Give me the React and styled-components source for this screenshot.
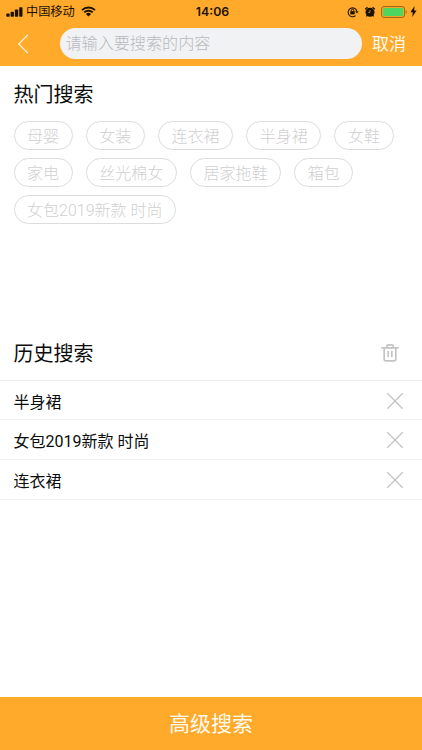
import { useState } from "react";
import styled, { createGlobalStyle } from "styled-components";

const GlobalStyle = createGlobalStyle`
  * {
    box-sizing: border-box;
  }

  body {
    margin: 0;
    background: #fff;
    color: #0c0c0c;
    font-family: Roboto, "Noto Sans CJK SC", sans-serif;
  }

  button,
  input {
    padding: 0;
    border: 0;
    background: none;
    color: inherit;
    font: inherit;
  }
`;

const Page = styled.div`
  display: flex;
  flex-direction: column;
  height: 750px;
  overflow: hidden;
`;

const Header = styled.header`
  height: 65.5px;
  background: #ffaa2b;
`;

const StatusBar = styled.div`
  display: grid;
  grid-template-columns: 1fr auto 1fr;
  align-items: center;
  height: 22px;
  padding: 0 5px 0 6px;
  color: #1c1203;
`;

const Carrier = styled.div`
  display: flex;
  align-items: center;
  font-size: 12.2px;
  line-height: 22px;

  span {
    margin: 0 6px 0 3px;
    padding-top: 1px;
  }
`;

const Clock = styled.div`
  padding-left: 2px;
  font-family: Inter, sans-serif;
  font-size: 12.3px;
  font-weight: 600;
`;

const StatusIcons = styled.div`
  display: flex;
  align-items: center;
  justify-content: flex-end;
  gap: 5px;

  svg:last-child {
    margin-left: -3px;
  }
`;

const SearchBar = styled.div`
  display: flex;
  align-items: center;
  height: 43px;
  padding: 0 16px 0 17px;
`;

const BackButton = styled.button`
  display: flex;
  width: 42.5px;
`;

const SearchInput = styled.input`
  width: 302.5px;
  height: 31px;
  margin-right: 10px;
  padding: 0 6px;
  border-radius: 16px;
  background: #f1f2f4;
  font-size: 16.1px;
  font-weight: 300;
  outline: none;

  &::placeholder {
    color: #b9babe;
    opacity: 1;
  }
`;

const CancelButton = styled.button`
  color: #fffaf0;
  font-size: 17px;
  line-height: 24px;
  white-space: nowrap;
`;

const Hot = styled.section`
  height: 259px;
  padding: 14px 13.5px 0;
`;

const Title = styled.h2`
  margin: 0;
  font-size: 20px;
  font-weight: 400;
  line-height: 30px;
`;

const Tags = styled.div`
  display: flex;
  flex-wrap: wrap;
  gap: 8px 13px;
  margin-top: 11.5px;
`;

const Tag = styled.button`
  height: 29px;
  padding: 1px 12.6px 0;
  border: 1px solid #dcdcdc;
  border-radius: 15px;
  color: #d0d0d0;
  font-size: 16px;
  font-weight: 300;
  line-height: 27px;
  white-space: nowrap;
`;

const History = styled.section`
  flex: 1;
`;

const HistoryHead = styled.div`
  display: flex;
  align-items: center;
  justify-content: space-between;
  height: 56.3px;
  padding: 1px 22px 0 13.5px;
  border-bottom: 1px solid #ececec;

  h2 {
    padding-top: 2px;
  }
`;

const HistoryRow = styled.div`
  display: flex;
  align-items: center;
  justify-content: space-between;
  height: 39.6px;
  padding: 1px 18px 0 13.5px;
  border-bottom: 1px solid #f0f0f0;
  font-size: 16px;
`;

const IconButton = styled.button`
  display: flex;
  color: #c4c4c4;
`;

const AdvancedButton = styled.button`
  height: 53px;
  padding-top: 1px;
  background: #ffaa2b;
  color: #fffaf0;
  font-size: 21px;
  line-height: 52px;
`;

const SignalIcon = () => (
  <svg width="17" height="10" viewBox="0 0 17 10" fill="currentColor">
    <rect x="0.3" y="6.4" width="3.3" height="3.3" rx="0.7" />
    <rect x="4.6" y="4.8" width="3.3" height="4.9" rx="0.7" />
    <rect x="8.9" y="2.6" width="3.3" height="7.1" rx="0.7" />
    <rect x="13.2" y="0.2" width="3.3" height="9.5" rx="0.7" />
  </svg>
);

const WifiIcon = () => (
  <svg width="15" height="11" viewBox="0 0 15 11" fill="none">
    <path
      d="M1 4.1a9.3 9.3 0 0 1 13 0M3.3 6.4a6 6 0 0 1 8.4 0"
      stroke="currentColor"
      strokeWidth="1.9"
    />
    <path d="M4.9 8a3.7 3.7 0 0 1 5.2 0l-2.6 2.6z" fill="currentColor" />
  </svg>
);

const RotationLockIcon = () => (
  <svg width="12" height="12" viewBox="0 0 12 12" fill="none">
    <path
      d="M8.5 9.6A4.4 4.4 0 1 1 9.8 5.2"
      stroke="currentColor"
      strokeWidth="1.1"
    />
    <path d="M8.2 5.2h3.4L9.9 7.6z" fill="currentColor" />
    <rect x="3.3" y="5.2" width="4.4" height="3.2" fill="currentColor" />
    <path
      d="M4.2 5.4V4.6a1.3 1.3 0 0 1 2.6 0v.8"
      stroke="currentColor"
      strokeWidth="1"
    />
  </svg>
);

const AlarmIcon = () => (
  <svg width="12" height="12" viewBox="0 0 12 12" fill="none">
    <circle cx="6" cy="6.2" r="4.5" fill="currentColor" />
    <path
      d="M1.2 3.2 3.5 1.2M10.8 3.2 8.5 1.2M3.2 9.4l-.8 1M8.8 9.4l.8 1"
      stroke="currentColor"
      strokeWidth="1.4"
    />
    <path d="M6 4v2.4H4.3" stroke="#c88522" strokeWidth="0.9" />
  </svg>
);

const BatteryIcon = () => (
  <svg width="27" height="12" viewBox="0 0 27 12" fill="none">
    <rect
      x="0.6"
      y="0.6"
      width="23"
      height="10.8"
      rx="2.4"
      stroke="#8a5c14"
      strokeWidth="0.9"
    />
    <rect x="2" y="2" width="20.2" height="8" rx="1.2" fill="#4cd55f" />
    <path d="M24.8 4v4c1.2-.5 1.2-3.5 0-4z" fill="#8a5c14" />
  </svg>
);

const BoltIcon = () => (
  <svg width="7" height="11" viewBox="0 0 7 11" fill="currentColor">
    <path d="M4.6 0 .4 6.2h2.4L2.2 11l4.4-6.4H4.1z" />
  </svg>
);

const BackIcon = () => (
  <svg width="12" height="20" viewBox="0 0 12 20" fill="none">
    <path d="M10.8 1 1.7 10l9.1 9" stroke="#fff5e0" strokeWidth="1.1" />
  </svg>
);

const TrashIcon = () => (
  <svg
    width="20"
    height="20"
    viewBox="0 0 20 20"
    fill="none"
    stroke="currentColor"
    strokeWidth="1.7"
  >
    <path d="M1.3 4.8h17.4M6.9 4.6V3q0-1.1 1.1-1.1h4q1.1 0 1.1 1.1v1.6" />
    <path d="M4.2 5v11.6q0 1.3 1.3 1.3h9q1.3 0 1.3-1.3V5M8.2 8v6M11.8 8v6" />
  </svg>
);

const CloseIcon = () => (
  <svg width="18" height="18" viewBox="0 0 18 18" fill="none">
    <path
      d="M1.3 1.3l15.4 15.4M16.7 1.3 1.3 16.7"
      stroke="currentColor"
      strokeWidth="1.3"
    />
  </svg>
);

const hotWords = [
  "母婴",
  "女装",
  "连衣裙",
  "半身裙",
  "女鞋",
  "家电",
  "丝光棉女",
  "居家拖鞋",
  "箱包",
  "女包2019新款 时尚",
];

export default function App() {
  const [keyword, setKeyword] = useState("");
  const [history, setHistory] = useState([
    "半身裙",
    "女包2019新款 时尚",
    "连衣裙",
  ]);

  const removeItem = (item) =>
    setHistory(history.filter((entry) => entry !== item));

  return (
    <Page>
      <GlobalStyle />
      <Header>
        <StatusBar>
          <Carrier>
            <SignalIcon />
            <span>中国移动</span>
            <WifiIcon />
          </Carrier>
          <Clock>14:06</Clock>
          <StatusIcons>
            <RotationLockIcon />
            <AlarmIcon />
            <BatteryIcon />
            <BoltIcon />
          </StatusIcons>
        </StatusBar>
        <SearchBar>
          <BackButton>
            <BackIcon />
          </BackButton>
          <SearchInput
            placeholder="请输入要搜索的内容"
            value={keyword}
            onChange={(e) => setKeyword(e.target.value)}
          />
          <CancelButton onClick={() => setKeyword("")}>取消</CancelButton>
        </SearchBar>
      </Header>
      <Hot>
        <Title>热门搜索</Title>
        <Tags>
          {hotWords.map((word) => (
            <Tag key={word} onClick={() => setKeyword(word)}>
              {word}
            </Tag>
          ))}
        </Tags>
      </Hot>
      <History>
        <HistoryHead>
          <Title>历史搜索</Title>
          <IconButton onClick={() => setHistory([])}>
            <TrashIcon />
          </IconButton>
        </HistoryHead>
        {history.map((item) => (
          <HistoryRow key={item}>
            {item}
            <IconButton onClick={() => removeItem(item)}>
              <CloseIcon />
            </IconButton>
          </HistoryRow>
        ))}
      </History>
      <AdvancedButton>高级搜索</AdvancedButton>
    </Page>
  );
}
